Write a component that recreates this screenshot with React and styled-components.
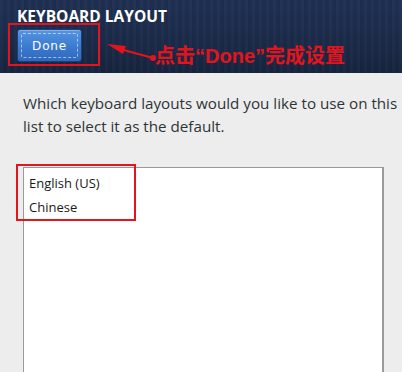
import styled, { createGlobalStyle } from "styled-components";

const GlobalStyle = createGlobalStyle`
  html, body { margin: 0; padding: 0; background: #ededed; }
  body { font-family: "Open Sans", "DejaVu Sans", sans-serif; }
`;

const Screen = styled.div`
  width: 402px;
  height: 372px;
  overflow: hidden;
  background: #ededed;
`;

/* dark top bar with the faint vertical streaks */
const Header = styled.header`
  height: 73px;
  box-sizing: border-box;
  padding: 9px 0 0 8px;
  background:
    repeating-linear-gradient(90deg, rgba(255,255,255,0.018) 0 3px, rgba(0,0,0,0.03) 3px 7px),
    linear-gradient(180deg, #1f3053 0%, #1b2a48 60%, #17243e 100%);
`;

const Title = styled.h1`
  margin: 0 0 0 9px;
  font-family: "Open Sans", sans-serif;
  font-size: 15.5px;
  font-weight: 700;
  color: #ffffff;
  line-height: 14px;
`;

const ActionRow = styled.div`
  display: flex;
  align-items: flex-start;
`;

/* red annotation frame drawn round the thing it points at */
const Highlight = styled.div`
  box-sizing: border-box;
  border: 2px solid #e3141c;
  padding: ${(p) => p.$pad};
`;

const DoneButton = styled.button`
  display: block;
  width: 65px;
  height: 33px;
  padding: 3px;
  border: 1px solid #1d3f78;
  border-radius: 3px;
  background: linear-gradient(180deg, #5595e0 0%, #3b7ad0 55%, #2f68bb 100%);
  box-shadow: inset 0 1px 0 rgba(255,255,255,0.25);
  cursor: pointer;
`;

const FocusRing = styled.span`
  display: flex;
  align-items: center;
  justify-content: center;
  height: 100%;
  box-sizing: border-box;
  border: 1px dashed rgba(255,255,255,0.55);
  border-radius: 2px;
  font-family: "DejaVu Sans", sans-serif;
  font-size: 12px;
  letter-spacing: 0.8px;
  color: #ffffff;
`;

const Arrow = styled.svg`
  margin: 17px 0 0 4px;
  overflow: visible;
  flex: none;
`;

const Note = styled.div`
  margin-top: 21px;
  font-family: "Liberation Sans", "Noto Sans CJK SC", sans-serif;
  font-size: 20px;
  font-weight: 700;
  line-height: 24px;
  color: #e3141c;
  white-space: nowrap;
`;

const Content = styled.main`
  padding: 19px 0 0 23px;
`;

const Prompt = styled.p`
  margin: 0;
  white-space: nowrap;
  font-family: "Open Sans", sans-serif;
  font-size: 15.2px;
  line-height: 23px;
  color: #2e3436;
`;

const LayoutList = styled.ul`
  position: relative;
  list-style: none;
  margin: 29px 0 0;
  padding: 3px 0 0 5px;
  width: 361px;
  height: 220px;
  box-sizing: border-box;
  background: #ffffff;
  border: 1px solid #9a9a9a;
  border-right-width: 2px;
`;

const LayoutItem = styled.li`
  font-family: "Open Sans", sans-serif;
  font-size: 13px;
  line-height: 24px;
  color: #1a1a1a;
`;

const ListMark = styled(Highlight)`
  position: absolute;
  left: -8px;
  top: -4px;
  width: 120px;
  height: 57px;
`;

const layouts = ["English (US)", "Chinese"];

export default function App() {
  return (
    <Screen>
      <GlobalStyle />
      <Header>
        <Title>KEYBOARD LAYOUT</Title>
        <ActionRow>
          <Highlight $pad="4px 16px 2px 7px">
            <DoneButton>
              <FocusRing>Done</FocusRing>
            </DoneButton>
          </Highlight>
          <Arrow width="51" height="24" viewBox="0 0 51 24">
            <line x1="12" y1="8" x2="49" y2="18" stroke="#e3141c" strokeWidth="2" />
            <polygon points="3,4 22,6 19,14" fill="#e3141c" />
            <circle cx="49" cy="18" r="3" fill="#e3141c" />
          </Arrow>
          <Note>点击“Done”完成设置</Note>
        </ActionRow>
      </Header>
      <Content>
        <Prompt>
          Which keyboard layouts would you like to use on this
          <br />
          list to select it as the default.
        </Prompt>
        <LayoutList>
          <ListMark />
          {layouts.map((l) => (
            <LayoutItem key={l}>{l}</LayoutItem>
          ))}
        </LayoutList>
      </Content>
    </Screen>
  );
}
